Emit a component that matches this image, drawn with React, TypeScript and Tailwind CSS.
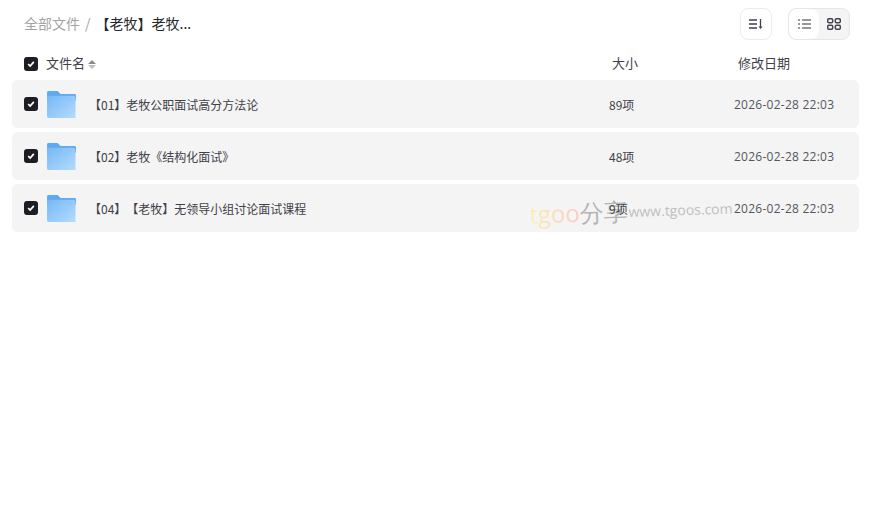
const rows = [
  { name: "【01】老牧公职面试高分方法论", count: "89项" },
  { name: "【02】老牧《结构化面试》", count: "48项" },
  { name: "【04】【老牧】无领导小组讨论面试课程", count: "9项" },
]

function Check() {
  return (
    <span className="flex h-[14px] w-[14px] shrink-0 items-center justify-center rounded-[3px] bg-[#1d1e23]">
      <svg width="8" height="8" viewBox="0 0 8 8" fill="none">
        <path d="M1.2 4.2 3.2 6.1 6.8 1.9" stroke="#fff" strokeWidth="1.7" />
      </svg>
    </span>
  )
}

function Folder() {
  return (
    <svg width="29" height="27" viewBox="0 0 30 28" className="block shrink-0">
      <defs>
        <linearGradient id="folderBody" x1="0" y1="0" x2="1" y2="1">
          <stop offset="0" stopColor="#75b8f5" />
          <stop offset="1" stopColor="#b4dbfd" />
        </linearGradient>
      </defs>
      <path d="M0 1.5A1.5 1.5 0 0 1 1.5 0H11l3 3h14.500A1.500 1.500 0 0 1 30 4.500V10H0Z" fill="#5eaaf0" />
      <path d="M0 5h27a2.500 2.500 0 0 1 2.500 2.500V28H1.500A1.500 1.500 0 0 1 0 26.500Z" fill="url(#folderBody)" />
      <rect x="22" y="8" width="4" height="1.500" fill="#8fc4f4" />
    </svg>
  )
}

export default function App() {
  return (
    <div className="relative h-[514px] w-[874px] overflow-hidden bg-white font-['Noto_Sans_CJK_SC','Noto_Sans',sans-serif] text-[12px] text-[#3f4049] [text-spacing-trim:space-all]">
      <div className="flex h-[48px] items-center pl-6 pr-6">
        <span className="mb-[2px] text-[14px] text-[#a3a3a3]">全部文件</span>
        <span className="mb-[2px] ml-[5px] text-[14px] text-[#a3a3a3]">/</span>
        <span className="mb-[2px] ml-[5px] text-[14px] text-[#26272c]">【老牧】老牧...</span>
        <button className="ml-auto flex h-8 w-8 items-center justify-center rounded-lg border border-[#ececec] bg-white">
          <svg width="14" height="12" viewBox="0 0 14 12" fill="none" stroke="#3f4049" strokeWidth="1.300">
            <path d="M0 2h8M0 6h8M0 10h8M11.500 1v9" />
            <path d="M9.500 8.500 11.500 11l2-2.500z" fill="#3f4049" stroke="none" />
          </svg>
        </button>
        <div className="ml-4 flex h-8 w-[62px] overflow-hidden rounded-lg border border-[#e6e6e6] bg-[#f4f4f4]">
          <span className="flex w-[30px] items-center justify-center rounded-lg bg-white">
            <svg width="13" height="10" viewBox="0 0 13 10" fill="none" stroke="#2f3036" strokeWidth="1.200">
              <path d="M0 1h2M4 1h9M0 5h2M4 5h9M0 9h2M4 9h9" />
            </svg>
          </span>
          <span className="flex flex-1 items-center justify-center">
            <svg width="14" height="12" viewBox="0 0 14 12" fill="none" stroke="#45464e" strokeWidth="1.500">
              <rect x="0.700" y="0.700" width="5" height="4" rx="1.300" />
              <rect x="8.300" y="0.700" width="5" height="4" rx="1.300" />
              <rect x="0.700" y="7.300" width="5" height="4" rx="1.300" />
              <rect x="8.300" y="7.300" width="5" height="4" rx="1.300" />
            </svg>
          </span>
        </div>
      </div>

      <div className="flex h-[32px] items-center pl-6 text-[13px]">
        <Check />
        <span className="mb-[2px] ml-2">文件名</span>
        <span className="ml-[3px] flex flex-col gap-[1px]">
          <span className="h-0 w-0 border-x-[4px] border-b-[4.500px] border-x-transparent border-b-[#8a8a8a]" />
          <span className="h-0 w-0 border-x-[4px] border-t-[4.500px] border-x-transparent border-t-[#bdbdbd]" />
        </span>
        <span className="absolute left-[612px] mb-[2px]">大小</span>
        <span className="absolute left-[738px] mb-[2px]">修改日期</span>
      </div>

      <div className="flex flex-col gap-1 px-3">
        {rows.map((row) => (
          <div key={row.name} className="flex h-12 w-[847px] items-center rounded-md bg-[#f4f4f4] pl-3">
            <Check />
            <span className="ml-[9px]">
              <Folder />
            </span>
            <span className="ml-[13px] mt-[2px] w-[520px] shrink-0">{row.name}</span>
            <span className="relative z-10 mt-[1px] w-[125px] shrink-0">{row.count}</span>
            <span className="mt-[1px] font-['Open_Sans',sans-serif] tracking-[0.25px] text-[#55565e]">2026-02-28 22:03</span>
          </div>
        ))}
      </div>

      <div className="pointer-events-none absolute left-[529px] top-[193px] flex rotate-[-2deg] items-center font-['Open_Sans',sans-serif]">
        <span className="bg-gradient-to-r from-[#fdeeb0] to-[#fcc9c0] bg-clip-text text-[24px] leading-[36px] text-transparent">tgoo</span>
        <span className="text-[24px] leading-[36px] text-[#b4b4b4]">分享</span>
        <span className="ml-[1px] text-[14px] text-[#c0c0c0]">www.tgoos.com</span>
      </div>
    </div>
  )
}
